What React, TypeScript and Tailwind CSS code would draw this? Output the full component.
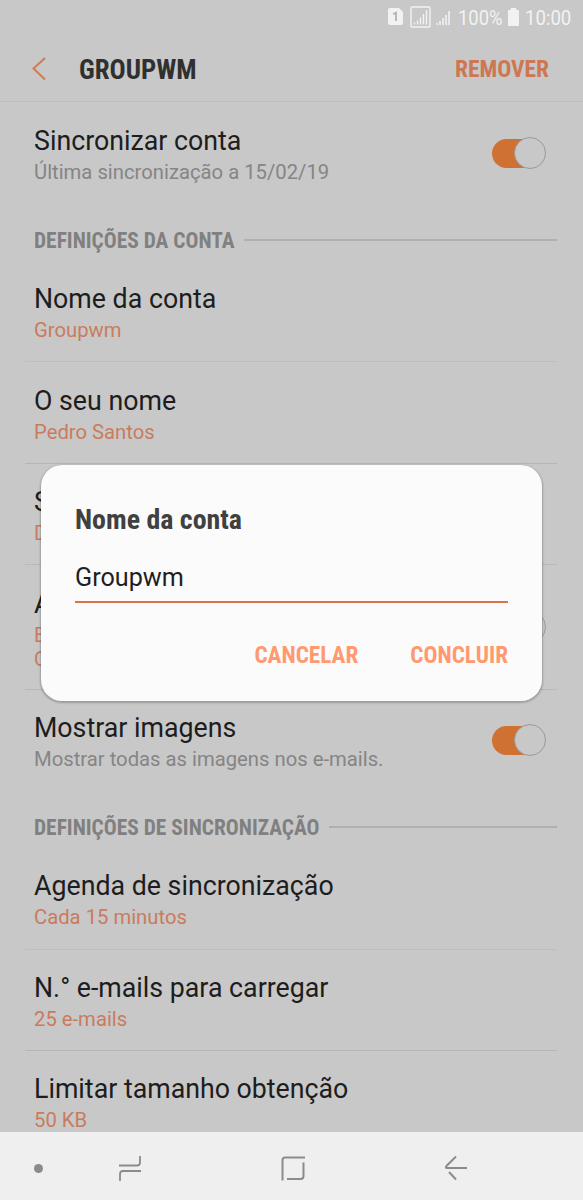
import type { ReactNode } from "react";

const condensed = "font-['Roboto_Condensed','Roboto',sans-serif] font-bold [font-stretch:75%] whitespace-nowrap";

function Toggle() {
  return (
    <span className="relative mr-[37px] block h-8 w-[54px] shrink-0">
      <span className="absolute left-0 top-[1.5px] h-[29px] w-[46px] rounded-full bg-[#cf7132]" />
      <span className="absolute left-[22px] top-0 size-8 rounded-full border border-[#9a9a9a] bg-[#c8c8c8]" />
    </span>
  );
}

type RowProps = {
  title: string;
  details: string[];
  height: string;
  pad?: string;
  togglePad?: string;
  muted?: boolean;
  toggle?: boolean;
  divider?: string;
};

function Row({ title, details, height, pad = "pt-[21px]", togglePad = "pt-[14px]", muted, toggle, divider }: RowProps) {
  return (
    <div className={`relative flex shrink-0 justify-between pl-[34px] ${pad} ${height}`}>
      <div className="whitespace-nowrap">
        <div className="text-[26.75px] leading-9 text-[#1d1d1d]">{title}</div>
        <div className="mt-px">
          {details.map((line) => (
            <div key={line} className={`text-[20.25px] leading-6 ${muted ? "text-[#858585]" : "text-[#c87c5d]"}`}>
              {line}
            </div>
          ))}
        </div>
      </div>
      {toggle && <div className={togglePad}><Toggle /></div>}
      {divider && <div className={`absolute bottom-0 left-[25px] right-[26px] h-px ${divider}`} />}
    </div>
  );
}

function Section({ children }: { children: ReactNode }) {
  return (
    <div className="flex h-[54px] shrink-0 items-center gap-[9.5px] pl-[34px] pr-[26px]">
      <h2 className={`${condensed} pt-[2px] text-[21.45px] leading-6 text-[#808080]`}>{children}</h2>
      <div className="h-[2px] flex-1 bg-[#b0b0b0]" />
    </div>
  );
}

function StatusBar() {
  return (
    <div className="flex h-9 shrink-0 items-center pl-[388px] text-[#f2f2f2]">
      <svg width="16" height="17" viewBox="0 0 16 17" className="-mt-[3px] shrink-0">
        <path d="M2 0h9l4 4v11a2 2 0 0 1-2 2H2a2 2 0 0 1-2-2V2a2 2 0 0 1 2-2z" fill="currentColor" />
        <path d="M5.200 6.200 8 4.800V13" fill="none" stroke="#b5b5b5" strokeWidth="1.9" />
      </svg>
      <svg width="21" height="22" viewBox="0 0 21 22" className="-mt-[3px] ml-[6px] shrink-0">
        <rect x="1" y="1" width="19" height="20" rx="1" fill="none" stroke="currentColor" strokeWidth="1.4" />
        <path d="M4.500 18.500v-2M7.500 18.500v-4M10.500 18.500v-7M13.500 18.500V8M16.500 18.500V4" stroke="currentColor" strokeWidth="1.4" />
      </svg>
      <svg width="15" height="16" viewBox="0 0 15 16" className="-mt-px ml-[5px] shrink-0">
        <path d="M1 15v-2M4 15v-4M7 15V8M10 15V5M13 15V1" stroke="currentColor" strokeWidth="1.6" />
      </svg>
      <span className="ml-[7px] w-[44px] whitespace-nowrap text-[20px]">
        <span className="inline-block origin-left scale-x-[0.92]">100%</span>
      </span>
      <svg width="11" height="18" viewBox="0 0 12 18" preserveAspectRatio="none" className="-mt-[2px] ml-[6px] mr-px shrink-0">
        <path d="M3 0h6v2h2a1 1 0 0 1 1 1v14a1 1 0 0 1-1 1H1a1 1 0 0 1-1-1V3a1 1 0 0 1 1-1h2z" fill="currentColor" />
      </svg>
      <span className="ml-[5px] whitespace-nowrap text-[20px]">
        <span className="inline-block origin-left scale-x-[0.93]">10:00</span>
      </span>
    </div>
  );
}

function Header() {
  return (
    <header className="flex h-[66px] shrink-0 items-center border-b border-[#bebebe] pl-[31px] pr-[34px]">
      <svg width="16" height="24" viewBox="0 0 16 24" fill="none" stroke="#cf7a58" strokeWidth="2">
        <path d="M14 1 2.500 11.500 14 22.500" />
      </svg>
      <h1 className={`${condensed} ml-[32px] pt-[3px] text-[26.8px] text-[#303030]`}>GROUPWM</h1>
      <button className={`${condensed} ml-auto pt-[2px] text-[23.4px] text-[#cd7753]`}>REMOVER</button>
    </header>
  );
}

function NavBar() {
  return (
    <nav className="absolute inset-x-0 bottom-0 flex h-[68px] items-center bg-[#efefef] pb-px pt-[5px]">
      <span className="ml-[34px] size-[9px] rounded-full bg-[#8b8b8b]" />
      <svg width="24" height="26" viewBox="0 0 24 26" className="ml-[75px]" fill="none" stroke="#8b8b8b" strokeWidth="1.8">
        <path d="M1 10.500h18q3 0 3-3V1M23 16H5q-3 0-3 3v7" />
      </svg>
      <svg width="24" height="25" viewBox="0 0 24 25" className="ml-[139px]" fill="none" stroke="#8b8b8b" strokeWidth="2">
        <path d="M1.500 24.500V4q0-2.500 2.500-2.500h20M22.500 6.500V20q0 3-3 3H6" />
      </svg>
      <svg width="24" height="26" viewBox="0 0 24 26" className="ml-[139px]" fill="none" stroke="#8b8b8b" strokeWidth="2">
        <path d="M12 1.500 2.500 11Q1 13 3 13h20M5 17l7 7.500" />
      </svg>
    </nav>
  );
}

function NameDialog() {
  return (
    <div role="dialog" className="absolute left-[41px] top-[465px] flex h-[236px] w-[501px] flex-col rounded-[21px] bg-[#fbfbfb] px-[34px] shadow-[0_1px_2px_1px_rgba(0,0,0,0.22)]">
      <h2 className={`${condensed} mt-[39px] text-[27.9px] leading-8 text-[#404040]`}>Nome da conta</h2>
      <div className="mt-[25px] h-[42px] border-b-2 border-[#dc7048] text-[25.2px] leading-[34px] text-[#1f1f1f]">Groupwm</div>
      <div className="mt-[38px] flex justify-end gap-[52px] leading-7">
        <button className={`${condensed} text-[23.2px] text-[#ff9970]`}>CANCELAR</button>
        <button className={`${condensed} text-[23.2px] text-[#ff9970]`}>CONCLUIR</button>
      </div>
    </div>
  );
}

export default function App() {
  return (
    <div className="relative flex h-[1200px] w-[583px] flex-col overflow-hidden bg-[#c8c8c8] font-['Roboto',sans-serif]">
      <StatusBar />
      <Header />
      <Row title="Sincronizar conta" details={["Última sincronização a 15/02/19"]} height="h-[111px]" muted toggle />
      <Section>DEFINIÇÕES DA CONTA</Section>
      <Row title="Nome da conta" details={["Groupwm"]} height="h-[95px]" pad="pt-[14px]" divider="bg-[#bebebe]" />
      <Row title="O seu nome" details={["Pedro Santos"]} height="h-[102px]" divider="bg-[#b5b5b5]" />
      <Row title="S" details={["D"]} height="h-[101px]" pad="pt-[20px]" divider="bg-[#b9b9b9]" />
      <Row title="A" details={["E", "C"]} height="h-[125px]" togglePad="pt-[25px]" toggle divider="bg-[#b9b9b9]" />
      <Row title="Mostrar imagens" details={["Mostrar todas as imagens nos e-mails."]} height="h-[110px]" pad="pt-[20px]" muted toggle />
      <Section>DEFINIÇÕES DE SINCRONIZAÇÃO</Section>
      <Row title="Agenda de sincronização" details={["Cada 15 minutos"]} height="h-[96px]" pad="pt-[14px]" divider="bg-[#bebebe]" />
      <Row title="N.° e-mails para carregar" details={["25 e-mails"]} height="h-[101px]" pad="pt-[20px]" divider="bg-[#b5b5b5]" />
      <Row title="Limitar tamanho obtenção" details={["50 KB"]} height="h-[101px]" pad="pt-[20px]" />
      <NameDialog />
      <NavBar />
    </div>
  );
}
